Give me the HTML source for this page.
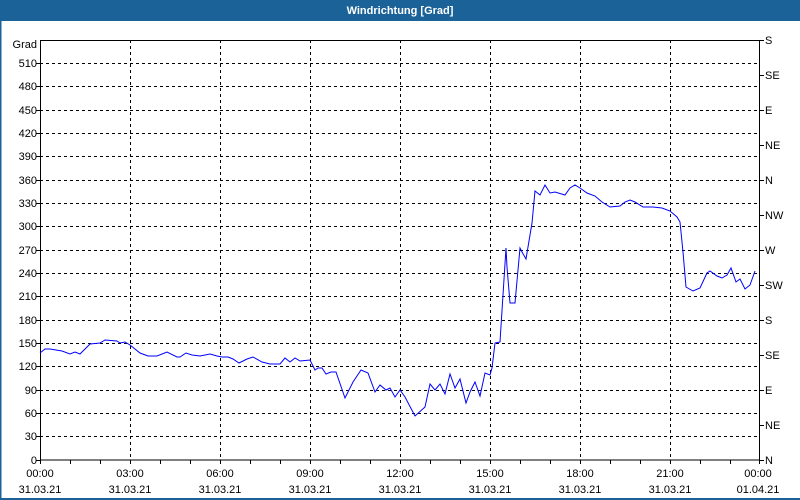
<!DOCTYPE html>
<html><head><meta charset="utf-8"><style>
html,body{margin:0;padding:0;width:800px;height:500px;overflow:hidden;background:#fff}
svg{display:block}
text{font-family:"Liberation Sans",sans-serif;font-size:11px;fill:#000}
</style></head><body>
<svg width="800" height="500" viewBox="0 0 800 500">
<rect x="0" y="0" width="800" height="500" fill="#fff"/>
<rect x="0" y="0" width="800" height="21" fill="#1b6298"/>
<rect x="0" y="0" width="1.5" height="500" fill="#1b6298"/>
<rect x="0" y="498" width="800" height="2" fill="#1b6298"/>
<text x="400" y="14" text-anchor="middle" style="fill:#fff;font-weight:bold;font-size:11px">Windrichtung [Grad]</text>
<g stroke="#000" stroke-dasharray="3,3" stroke-width="1" shape-rendering="crispEdges">
<path d="M40 63.5H760M40 86.5H760M40 110.5H760M40 133.5H760M40 156.5H760M40 180.5H760M40 203.5H760M40 226.5H760M40 250.5H760M40 273.5H760M40 296.5H760M40 320.5H760M40 343.5H760M40 366.5H760M40 390.5H760M40 413.5H760M40 436.5H760"/>
<path d="M130.5 40V460M220.5 40V460M310.5 40V460M400.5 40V460M490.5 40V460M580.5 40V460M670.5 40V460"/>
</g>
<g stroke="#000" stroke-width="1" fill="none" shape-rendering="crispEdges">
<rect x="40.5" y="40.5" width="719" height="419.5"/>
<path d="M40.5 460v4M70.5 460v4M100.5 460v4M130.5 460v4M160.5 460v4M190.5 460v4M220.5 460v4M250.5 460v4M280.5 460v4M310.5 460v4M340.5 460v4M370.5 460v4M400.5 460v4M430.5 460v4M460.5 460v4M490.5 460v4M520.5 460v4M550.5 460v4M580.5 460v4M610.5 460v4M640.5 460v4M670.5 460v4M700.5 460v4M730.5 460v4M759.5 460v4"/>
<path d="M36 460.5h4M36 436.5h4M36 413.5h4M36 390.5h4M36 366.5h4M36 343.5h4M36 320.5h4M36 296.5h4M36 273.5h4M36 250.5h4M36 226.5h4M36 203.5h4M36 180.5h4M36 156.5h4M36 133.5h4M36 110.5h4M36 86.5h4M36 63.5h4"/>
<path d="M760 40.5h4M760 75.5h4M760 110.5h4M760 145.5h4M760 180.5h4M760 215.5h4M760 250.5h4M760 285.5h4M760 320.5h4M760 355.5h4M760 390.5h4M760 425.5h4M760 460.5h4"/>
</g>
<g text-anchor="end">
<text x="37" y="48">Grad</text>
<text x="37" y="67">510</text><text x="37" y="90">480</text><text x="37" y="114">450</text><text x="37" y="137">420</text><text x="37" y="160">390</text><text x="37" y="184">360</text><text x="37" y="207">330</text><text x="37" y="230">300</text><text x="37" y="254">270</text><text x="37" y="277">240</text><text x="37" y="300">210</text><text x="37" y="324">180</text><text x="37" y="347">150</text><text x="37" y="370">120</text><text x="37" y="394">90</text><text x="37" y="417">60</text><text x="37" y="440">30</text><text x="37" y="464">0</text>
</g>
<g>
<text x="765" y="44">S</text><text x="765" y="79">SE</text><text x="765" y="114">E</text><text x="765" y="149">NE</text><text x="765" y="184">N</text><text x="765" y="219">NW</text><text x="765" y="254">W</text><text x="765" y="289">SW</text><text x="765" y="324">S</text><text x="765" y="359">SE</text><text x="765" y="394">E</text><text x="765" y="429">NE</text><text x="765" y="464">N</text>
</g>
<g text-anchor="middle">
<text x="40" y="477">00:00</text><text x="130" y="477">03:00</text><text x="220" y="477">06:00</text><text x="310" y="477">09:00</text><text x="400" y="477">12:00</text><text x="490" y="477">15:00</text><text x="580" y="477">18:00</text><text x="670" y="477">21:00</text><text x="758" y="477">00:00</text>
<text x="40" y="493">31.03.21</text><text x="130" y="493">31.03.21</text><text x="220" y="493">31.03.21</text><text x="310" y="493">31.03.21</text><text x="400" y="493">31.03.21</text><text x="490" y="493">31.03.21</text><text x="580" y="493">31.03.21</text><text x="670" y="493">31.03.21</text><text x="758" y="493">01.04.21</text>
</g>
<polyline fill="none" stroke="#0000ff" stroke-width="1" points="40,353 45,349 50,349 62,351 70,354 75,352 80,354 90,344 100,343 105,340 117,341 120,343 125,342 130,345 140,353 148,356 157,356 167,352 177,357 180,357 186,353 192,355 200,356 210,354 217,356 222,357 228,357 233,359 239,363 247,359 253,357 262,362 270,364 280,364 285,358 290,362 295,358 300,361 310,360 315,370 318,368 322,368 326,374 331,372 336,372 345,398 353,382 361,370 368,373 375,392 380,385 386,390 390,388 395,397 400,390 405,397 415,416 425,407 430,384 435,390 440,384 445,394 450,374 455,388 460,379 466,403 470,392 475,382 480,396 485,373 490,375 492,368 495,343 500,342 503,295 506,248 507,267 510,303 515,303 520,248 522,252 526,259 532,223 535,191 540,195 545,185 550,193 555,192 565,195 570,188 575,185 580,188 587,193 595,196 602,202 610,207 620,206 625,202 630,200 635,202 643,207 653,207 662,208 670,211 677,217 680,222 683,252 686,287 693,291 700,288 707,273 710,271 717,276 722,278 727,275 731,268 736,282 740,279 745,289 750,285 755,271"/>
</svg>
</body></html>
